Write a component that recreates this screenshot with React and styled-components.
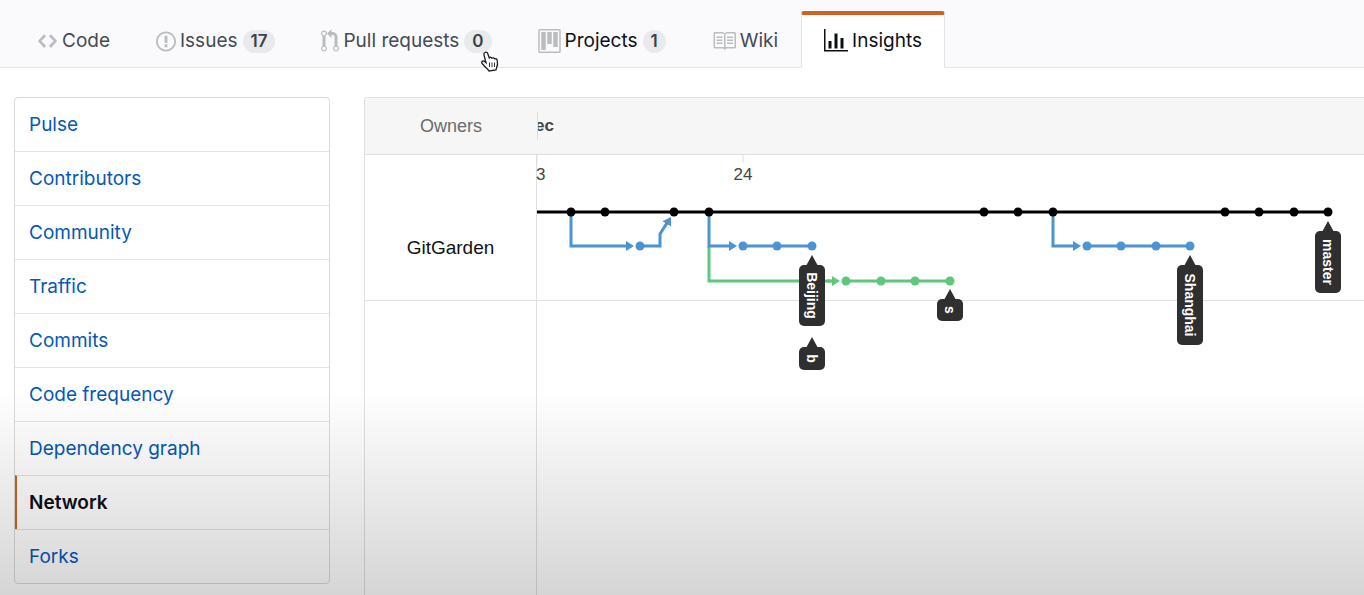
import React from 'react';
import styled, { createGlobalStyle, css } from 'styled-components';

const GlobalStyle = createGlobalStyle`
  * { box-sizing: border-box; }
  body {
    margin: 0;
    background: #fff;
    color: #24292e;
    font-family: Inter, "Open Sans", "Liberation Sans", sans-serif;
    overflow-x: hidden;
  }
`;

const Page = styled.div`
  min-height: 100vh;
  display: flex;
  flex-direction: column;
`;

const TabBar = styled.nav`
  display: flex;
  align-items: flex-end;
  height: 68px;
  padding-left: 14px;
  background: #fafafd;
  border-bottom: 1px solid #e1e4e8;
`;

const Tab = styled.a`
  display: flex;
  align-items: center;
  gap: 4px;
  height: 57px;
  margin-bottom: -1px;
  padding: 0 22px;
  border: 1px solid transparent;
  border-top: 4px solid transparent;
  border-radius: 3px 3px 0 0;
  color: #444b53;
  font-size: 19px;
  line-height: 24px;
  white-space: nowrap;
  text-decoration: none;
  svg { display: block; flex: none; color: #babdc0; }
  ${(p) => p.$hovered && css`color: #0d1013;`}
  ${(p) => p.$active && css`
    color: #0d1013;
    background: #fff;
    border-color: #cf6326 #e1e4e8 transparent;
    svg { color: #0d1013; }
  `}
`;

const Count = styled.span`
  padding: 0 8px;
  margin-left: 1px;
  border-radius: 12px;
  background: #e8eaec;
  color: #3b4248;
  font-size: 17px;
  font-weight: 600;
  line-height: 23px;
`;

const Content = styled.main`
  flex: 1;
  display: flex;
  align-items: flex-start;
  gap: 34px;
  padding: 29px 0 0 14px;
`;

const SideMenu = styled.nav`
  flex: none;
  width: 316px;
  border: 1px solid #d8dbdf;
  border-radius: 4px;
  overflow: hidden;
`;

const MenuItem = styled.a`
  display: block;
  padding: 15px 14px 14px;
  color: #0558ba;
  font-size: 19px;
  line-height: 24px;
  text-decoration: none;
  & + & { border-top: 1px solid #e1e4e8; }
  ${(p) => p.$active && css`
    padding-left: 12px;
    border-left: 2px solid #cf6326;
    color: #0d1013;
    font-weight: 600;
  `}
`;

const NetworkPanel = styled.section`
  flex: 1;
  min-width: 0;
  align-self: stretch;
  display: grid;
  grid-template-columns: 172px minmax(0, 1fr);
  grid-template-rows: 57px 146px 1fr;
  border: 1px solid #dcdfe3;
  border-width: 1px 0 0 1px;
  border-top-left-radius: 4px;
  font-family: "Liberation Sans", Arial, sans-serif;
  overflow: hidden;
`;

const HeaderCell = styled.div`
  display: flex;
  align-items: center;
  justify-content: ${(p) => (p.$month ? 'flex-start' : 'center')};
  background: #f6f6f6;
  border-bottom: 1px solid #dddfe1;
  color: #6b6b6b;
  font-size: 18px;
`;

const Month = styled.span`
  overflow: hidden;
  border-left: 1px solid #dddfe1;
  color: #444;
  font-size: 17px;
  font-weight: 700;
  line-height: 28px;
  text-indent: -3px;
`;

const OwnerCell = styled.div`
  display: flex;
  align-items: center;
  justify-content: center;
  padding-top: 40px;
  border-right: 1px solid #dddfe1;
  border-bottom: ${(p) => (p.$empty ? 'none' : '1px solid #dddfe1')};
  color: #111;
  font-size: 19px;
`;

const Lane = styled.div`
  border-bottom: 1px solid #dddfe1;
`;

const Graph = styled.svg`
  display: block;
  overflow: visible;
`;

const DayText = styled.text`
  fill: #444;
  font-size: 17px;
`;

const TagText = styled.text`
  fill: #fff;
  font-size: 14px;
  font-weight: 700;
`;

const BottomShade = styled.div`
  position: fixed;
  inset: auto 0 0;
  height: 205px;
  background: linear-gradient(transparent, rgba(0, 0, 0, 0.165));
  pointer-events: none;
`;

const Pointer = styled.svg`
  position: absolute;
  left: 480px;
  top: 51px;
  pointer-events: none;
`;

const icons = {
  code: [21, 22, 14, 16, 'M9.5 3L8 4.5 11.5 8 8 11.5 9.5 13 14 8 9.5 3zm-5 0L0 8l4.5 5L6 11.5 2.5 8 6 4.5 4.5 3z'],
  issue: [20, 23, 14, 16, 'M7 2.3c3.14 0 5.7 2.56 5.7 5.7s-2.56 5.7-5.7 5.7A5.71 5.71 0 0 1 1.3 8c0-3.14 2.56-5.7 5.7-5.7zM7 1C3.14 1 0 4.14 0 8s3.14 7 7 7 7-3.14 7-7-3.14-7-7-7zm1 3H6v5h2V4zm0 6H6v2h2v-2z'],
  pull: [18, 24, 12, 16, 'M11 11.28V5c-.03-.78-.34-1.47-.94-2.06C9.46 2.35 8.78 2.03 8 2H7V0L4 3l3 3V4h1c.27.02.48.11.69.31.21.2.3.42.31.69v6.28A1.993 1.993 0 0 0 10 15a1.993 1.993 0 0 0 1-3.72zm-1 2.92c-.66 0-1.2-.55-1.2-1.2 0-.65.55-1.2 1.2-1.2.65 0 1.2.55 1.2 1.2 0 .65-.55 1.2-1.2 1.2zM4 3c0-1.11-.89-2-2-2a1.993 1.993 0 0 0-1 3.72v6.56A1.993 1.993 0 0 0 2 15a1.993 1.993 0 0 0 1-3.72V4.72c.59-.34 1-.98 1-1.72zm-.8 10c0 .66-.55 1.2-1.2 1.2-.65 0-1.2-.55-1.2-1.2 0-.65.55-1.2 1.2-1.2.65 0 1.2.55 1.2 1.2zM2 4.2C1.34 4.2.8 3.65.8 3c0-.65.55-1.2 1.2-1.2.65 0 1.2.55 1.2 1.2 0 .65-.55 1.2-1.2 1.2z'],
  project: [23, 24, 15, 16, 'M10 12h3V2h-3v10zm-4-2h3V2H6v8zm-4 4h3V2H2v12zm-1 1h13V1H1v14zM14 0H1a1 1 0 0 0-1 1v14a1 1 0 0 0 1 1h13a1 1 0 0 0 1-1V1a1 1 0 0 0-1-1z'],
  wiki: [24, 24, 16, 16, 'M3 5h4v1H3V5zm0 3h4V7H3v1zm0 2h4V9H3v1zm11-5h-4v1h4V5zm0 2h-4v1h4V7zm0 2h-4v1h4V9zm2-6v9c0 .55-.45 1-1 1H9.5l-1 1-1-1H2c-.55 0-1-.45-1-1V3c0-.55.45-1 1-1h5.5l1 1 1-1H15c.55 0 1 .45 1 1zm-8 .5L7.5 3H2v9h6V3.5zm7-.5H9.5l-.5.5V12h6V3z'],
  insights: [24, 24, 16, 16, 'M16 14v1H0V0h1v14h15zM5 13H3V8h2v5zm4 0H7V3h2v10zm4 0h-2V6h2v7z'],
};

function Icon({ name }) {
  const [width, height, w, h, d] = icons[name];
  return (
    <svg width={width} height={height} viewBox={`0 0 ${w} ${h}`} fill="currentColor" fillRule="evenodd" aria-hidden="true">
      <path d={d} />
    </svg>
  );
}

const tabs = [
  { icon: 'code', label: 'Code' },
  { icon: 'issue', label: 'Issues', count: 17 },
  { icon: 'pull', label: 'Pull requests', count: 0 },
  { icon: 'project', label: 'Projects', count: 1, hovered: true },
  { icon: 'wiki', label: 'Wiki' },
  { icon: 'insights', label: 'Insights', active: true },
];

const menu = ['Pulse', 'Contributors', 'Community', 'Traffic', 'Commits', 'Code frequency', 'Dependency graph', 'Network', 'Forks'];

const BLACK = '#000';
const BLUE = '#4b93d1';
const GREEN = '#5fc77b';

const commits = [
  { color: BLACK, y: 57, xs: [34, 68, 137, 172, 447, 481, 516, 688, 722, 757, 791] },
  { color: BLUE, y: 91, xs: [103, 206, 240, 275, 550, 584, 619, 653] },
  { color: GREEN, y: 126, xs: [309, 344, 378, 413] },
];

const tags = [
  { name: 'Beijing', x: 275, y: 100, length: 61 },
  { name: 'b', x: 275, y: 182, length: 23 },
  { name: 's', x: 413, y: 134, length: 22 },
  { name: 'Shanghai', x: 653, y: 100, length: 80 },
  { name: 'master', x: 791, y: 66, length: 62 },
];

function Arrow({ x, y, color, angle = 0 }) {
  return <path d="M0 0L-8 -5V5Z" fill={color} transform={`translate(${x} ${y}) rotate(${angle})`} />;
}

function Tag({ name, x, y, length }) {
  return (
    <g transform={`translate(${x} ${y})`}>
      <path d="M0 0L6 11H-6Z" fill="#2f2f2f" />
      <rect x="-13" y="10" width="26" height={length} rx="5" fill="#2f2f2f" />
      <TagText transform={`translate(-5 ${10 + length / 2}) rotate(90)`} textAnchor="middle">{name}</TagText>
    </g>
  );
}

function NetworkGraph() {
  return (
    <Graph width="100%" height="145" role="img" aria-label="Commit network">
      <path d="M0 0V8M206 0V8" stroke="#dddfe1" />
      <DayText x="-1" y="25">3</DayText>
      <DayText x="206" y="25" textAnchor="middle">24</DayText>
      <g fill="none" strokeWidth="3">
        <path d="M172 91V126H294" stroke={GREEN} />
        <path d="M34 57V91H92M103 91H123V79L130 68M172 57V91H195M206 91H275M516 57V91H539M550 91H653" stroke={BLUE} />
        <path d="M309 126H413M290 126H298" stroke={GREEN} />
        <path d="M0 57H791" stroke={BLACK} />
      </g>
      <Arrow x={97} y={91} color={BLUE} />
      <Arrow x={134} y={62} color={BLUE} angle={-58} />
      <Arrow x={200} y={91} color={BLUE} />
      <Arrow x={544} y={91} color={BLUE} />
      <Arrow x={303} y={126} color={GREEN} />
      {commits.map(({ color, y, xs }) => xs.map((x) => <circle key={`${x}-${y}`} cx={x} cy={y} r="4.5" fill={color} />))}
      {tags.map((tag) => <Tag key={tag.name} {...tag} />)}
    </Graph>
  );
}

export default function App() {
  return (
    <Page>
      <GlobalStyle />
      <TabBar aria-label="Repository">
        {tabs.map(({ icon, label, count, active, hovered }) => (
          <Tab key={label} href="#" $active={active} $hovered={hovered} aria-current={active ? 'page' : undefined}>
            <Icon name={icon} />
            <span>{label}</span>
            {count !== undefined && <Count>{count}</Count>}
          </Tab>
        ))}
      </TabBar>
      <Content>
        <SideMenu aria-label="Insights">
          {menu.map((item) => (
            <MenuItem key={item} href="#" $active={item === 'Network'}>{item}</MenuItem>
          ))}
        </SideMenu>
        <NetworkPanel>
          <HeaderCell>Owners</HeaderCell>
          <HeaderCell $month><Month>ec</Month></HeaderCell>
          <OwnerCell>GitGarden</OwnerCell>
          <Lane><NetworkGraph /></Lane>
          <OwnerCell $empty />
        </NetworkPanel>
      </Content>
      <BottomShade />
      <Pointer width="20" height="22" viewBox="0 0 20 22" aria-hidden="true">
        <path d="M5 1.5C6 .8 7.3 1.3 7.7 2.5L9.3 7C10 6 11.5 6 12 7.2C13 6.5 14 6.8 14.5 7.8C15.8 7.3 17 8 17.2 9.3C17.8 12 17.5 15 16.5 17L16 19L9 20L7.500 18C5.5 16.5 4 14.5 2 12.3C1 11 2.500 9.3 4.2 10.3L6 11.8L4 4C3.7 2.9 4 2 5 1.5Z" fill="#fff" stroke="#222" strokeWidth="1.3" />
        <path d="M9.5 11.5V16M12 11.5V16M14.5 11.5V16" stroke="#333" />
      </Pointer>
    </Page>
  );
}
